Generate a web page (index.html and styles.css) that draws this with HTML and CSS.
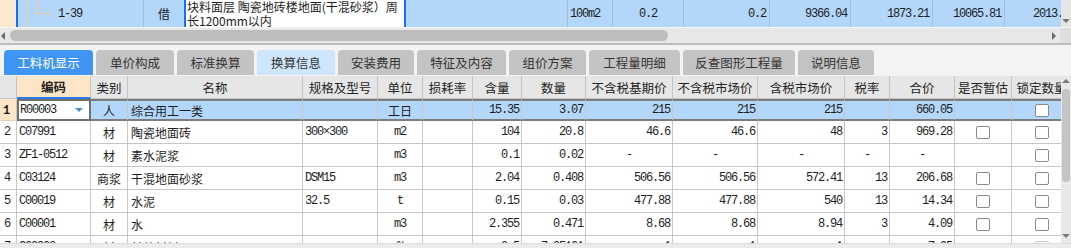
FILE: index.html
```html
<!DOCTYPE html>
<html lang="zh-CN">
<head>
<meta charset="utf-8">
<title>工料机显示</title>
<link rel="stylesheet" href="styles.css">
</head>
<body>
<div class="app">
  <div class="upper">
    <div class="trow">
      <div class="t-c t-peach"></div>
      <div class="t-c t-blueline"></div>
      <div class="t-c t-tree">
        <svg class="tree" width="40" height="27" viewBox="0 0 40 27"><path d="M8.5 0V27M18.5 0V13.5H34" fill="none" stroke="#f4c58c" stroke-width="1"/></svg>
        <span class="mono">1-39</span>
      </div>
      <div class="t-c t-sep t-center">借</div>
      <div class="t-c t-blueline"></div>
      <div class="t-c t-name">块料面层 陶瓷地砖楼地面(干混砂浆）周<br>长1200mm以内</div>
      <div class="t-c t-blueline"></div>
      <div class="t-c"></div>
      <div class="t-c t-sep mono t-left">100m2</div>
      <div class="t-c t-sep mono t-center">0.2</div>
      <div class="t-c t-sep mono t-right">0.2</div>
      <div class="t-c t-sep mono t-right">9366.04</div>
      <div class="t-c t-sep mono t-right">1873.21</div>
      <div class="t-c t-sep mono t-right">10065.81</div>
      <div class="t-c t-sep mono t-right t-last">2013.16</div>
    </div>
    <div class="t-vscroll"><span class="arr arr-down"></span></div>
  </div>
  <div class="hbar">
    <div class="h-track">
      <span class="arr arr-left"></span>
      <span class="h-thumb"></span>
      <span class="arr arr-right"></span>
    </div>
    <div class="h-corner"></div>
  </div>
  <div class="tabs">
    <div class="tab tab-active w89">工料机显示</div>
    <div class="tab w78">单价构成</div>
    <div class="tab w77">标准换算</div>
    <div class="tab tab-light w78">换算信息</div>
    <div class="tab w76">安装费用</div>
    <div class="tab w89">特征及内容</div>
    <div class="tab w77">组价方案</div>
    <div class="tab w91">工程量明细</div>
    <div class="tab w112">反查图形工程量</div>
    <div class="tab w76">说明信息</div>
  </div>
  <div class="lower">
    <div class="grid">
      <div class="row head">
        <div class="c"></div>
        <div class="c c-code-h">编码</div>
        <div class="c">类别</div>
        <div class="c">名称</div>
        <div class="c">规格及型号</div>
        <div class="c">单位</div>
        <div class="c">损耗率</div>
        <div class="c">含量</div>
        <div class="c">数量</div>
        <div class="c">不含税基期价</div>
        <div class="c">不含税市场价</div>
        <div class="c">含税市场价</div>
        <div class="c">税率</div>
        <div class="c">合价</div>
        <div class="c">是否暂估</div>
        <div class="c">锁定数量</div>
      </div>
      <div class="row sel">
        <div class="c rn rn-sel">1</div>
        <div class="c code code-edit"><span class="mono">R00003</span><span class="dd"></span></div>
        <div class="c ctr">人</div>
        <div class="c nm">综合用工一类</div>
        <div class="c"></div>
        <div class="c ctr">工日</div>
        <div class="c"></div>
        <div class="c num">15.35</div>
        <div class="c num">3.07</div>
        <div class="c num">215</div>
        <div class="c num">215</div>
        <div class="c num">215</div>
        <div class="c"></div>
        <div class="c num">660.05</div>
        <div class="c"></div>
        <div class="c ctr"><span class="cb"></span></div>
      </div>
      <div class="row">
        <div class="c rn">2</div>
        <div class="c code mono">C07991</div>
        <div class="c ctr">材</div>
        <div class="c nm">陶瓷地面砖</div>
        <div class="c spec mono">300×300</div>
        <div class="c ctr mono">m2</div>
        <div class="c"></div>
        <div class="c num">104</div>
        <div class="c num">20.8</div>
        <div class="c num">46.6</div>
        <div class="c num">46.6</div>
        <div class="c num">48</div>
        <div class="c num">3</div>
        <div class="c num">969.28</div>
        <div class="c ctr"><span class="cb"></span></div>
        <div class="c ctr"><span class="cb"></span></div>
      </div>
      <div class="row">
        <div class="c rn">3</div>
        <div class="c code mono">ZF1-0512</div>
        <div class="c ctr">材</div>
        <div class="c nm">素水泥浆</div>
        <div class="c"></div>
        <div class="c ctr mono">m3</div>
        <div class="c"></div>
        <div class="c num">0.1</div>
        <div class="c num">0.02</div>
        <div class="c ctr mono">-</div>
        <div class="c ctr mono">-</div>
        <div class="c ctr mono">-</div>
        <div class="c ctr mono">-</div>
        <div class="c ctr mono">-</div>
        <div class="c"></div>
        <div class="c ctr"><span class="cb"></span></div>
      </div>
      <div class="row">
        <div class="c rn">4</div>
        <div class="c code mono">C03124</div>
        <div class="c ctr">商浆</div>
        <div class="c nm">干混地面砂浆</div>
        <div class="c spec mono">DSM15</div>
        <div class="c ctr mono">m3</div>
        <div class="c"></div>
        <div class="c num">2.04</div>
        <div class="c num">0.408</div>
        <div class="c num">506.56</div>
        <div class="c num">506.56</div>
        <div class="c num">572.41</div>
        <div class="c num">13</div>
        <div class="c num">206.68</div>
        <div class="c ctr"><span class="cb"></span></div>
        <div class="c ctr"><span class="cb"></span></div>
      </div>
      <div class="row">
        <div class="c rn">5</div>
        <div class="c code mono">C00019</div>
        <div class="c ctr">材</div>
        <div class="c nm">水泥</div>
        <div class="c spec mono">32.5</div>
        <div class="c ctr mono">t</div>
        <div class="c"></div>
        <div class="c num">0.15</div>
        <div class="c num">0.03</div>
        <div class="c num">477.88</div>
        <div class="c num">477.88</div>
        <div class="c num">540</div>
        <div class="c num">13</div>
        <div class="c num">14.34</div>
        <div class="c ctr"><span class="cb"></span></div>
        <div class="c ctr"><span class="cb"></span></div>
      </div>
      <div class="row">
        <div class="c rn">6</div>
        <div class="c code mono">C00001</div>
        <div class="c ctr">材</div>
        <div class="c nm">水</div>
        <div class="c"></div>
        <div class="c ctr mono">m3</div>
        <div class="c"></div>
        <div class="c num">2.355</div>
        <div class="c num">0.471</div>
        <div class="c num">8.68</div>
        <div class="c num">8.68</div>
        <div class="c num">8.94</div>
        <div class="c num">3</div>
        <div class="c num">4.09</div>
        <div class="c ctr"><span class="cb"></span></div>
        <div class="c ctr"><span class="cb"></span></div>
      </div>
      <div class="row">
        <div class="c rn">7</div>
        <div class="c code mono">C00003</div>
        <div class="c ctr">材</div>
        <div class="c nm">其他材料</div>
        <div class="c"></div>
        <div class="c ctr mono">%</div>
        <div class="c"></div>
        <div class="c num">2.5</div>
        <div class="c num">7.05101</div>
        <div class="c num">1</div>
        <div class="c num">1</div>
        <div class="c num">1</div>
        <div class="c"></div>
        <div class="c num">7.05</div>
        <div class="c"></div>
        <div class="c ctr"><span class="cb cb-faint"></span></div>
      </div>
    </div>
    <div class="vscroll">
      <span class="arr arr-up"></span>
      <span class="v-thumb"></span>
      <span class="v-space"></span>
      <span class="arr arr-down"></span>
    </div>
  </div>
  <div class="bottom"></div>
</div>
</body>
</html>
```
FILE: styles.css
```css
* { box-sizing: border-box; }
html, body { margin: 0; padding: 0; }
body {
  width: 1071px;
  height: 248px;
  overflow: hidden;
  background: #f3f3f3;
  font-family: "Noto Sans CJK SC", "Liberation Sans", sans-serif;
  font-size: 12px;
  color: #1e1e1e;
}
.app { width: 1071px; height: 248px; display: flex; flex-direction: column; }

.mono {
  font-family: "Liberation Mono", "Noto Sans CJK SC", monospace;
  font-size: 12px;
  letter-spacing: -1.2px;
}

/* ---------- upper table row ---------- */
.upper { display: flex; height: 27px; }
.trow {
  width: 1061px;
  overflow: hidden;
  display: grid;
  grid-template-columns: 16px 2px 125px 41px 2px 218px 2px 161px 45px 71px 86px 81px 82px 72px 80px;
  background: #b3d6fb;
}
.t-c { height: 27px; display: flex; align-items: center; white-space: nowrap; overflow: hidden; }
.t-peach { background: #fde9cf; }
.t-blueline { background: #1a6ef2; }
.t-sep { border-left: 1px solid #a8bdd3; }
.t-center { justify-content: center; }
.t-left { padding-left: 2px; }
.t-right { justify-content: flex-end; padding-right: 3px; }
.t-last { padding-right: 9px; }
.t-tree { align-items: center; }
.tree { display: block; flex: none; }
.t-name {
  background: #ffffff;
  display: block;
  padding: 0 0 0 1px;
  line-height: 13.5px;
  white-space: normal;
}
.t-vscroll {
  width: 10px;
  background: #e6e6e6;
  display: flex;
  flex-direction: column;
  justify-content: flex-end;
  align-items: center;
  padding-bottom: 4px;
}

/* arrows */
.arr { display: block; width: 0; height: 0; border-style: solid; }
.arr-down { border-width: 4px 4px 0 4px; border-color: #7a7a7a transparent transparent transparent; }
.arr-up { border-width: 0 4px 4px 4px; border-color: transparent transparent #7a7a7a transparent; }
.arr-left { border-width: 4px 4px 4px 0; border-color: transparent #6a6a6a transparent transparent; }
.arr-right { border-width: 4px 0 4px 4px; border-color: transparent transparent transparent #6a6a6a; }

/* ---------- horizontal scrollbar ---------- */
.hbar {
  display: flex;
  height: 18px;
  border-top: 1px solid #f6f6f6;
  border-bottom: 2px solid #bdbdbd;
}
.h-track {
  flex: 1;
  background: #e8e8e8;
  display: flex;
  align-items: center;
  padding: 0 0 0 1px;
}
.h-thumb {
  display: block;
  width: 658px;
  height: 11px;
  margin-left: 5px;
  border-radius: 6px;
  background: #bdbdbd;
}
.h-track .arr-right { margin-left: auto; margin-right: 4px; }
.h-corner { width: 11px; background: #dedede; }

/* ---------- tabs ---------- */
.tabs {
  height: 31px;
  display: flex;
  align-items: flex-start;
  gap: 3px;
  padding: 5px 0 0 4px;
  background: #f3f3f3;
}
.tab {
  height: 25px;
  display: flex;
  align-items: center;
  justify-content: center;
  background: #c3c3c3;
  color: #333333;
  border-radius: 4px 4px 0 0;
  font-size: 12.5px;
}
.tab-active { background: #3f95f3; color: #ffffff; }
.tab-light { background: #cde6fc; }
.w76 { width: 76px; } .w77 { width: 77px; } .w78 { width: 78px; }
.w89 { width: 89px; } .w91 { width: 91px; } .w112 { width: 112px; }

/* ---------- lower grid ---------- */
.lower { display: flex; height: 167px; }
.grid { width: 1061px; overflow: hidden; background: #ffffff; }
.row {
  display: grid;
  grid-template-columns: 17px 74px 37px 175px 75px 45px 50px 49px 64px 87px 85px 87px 45px 65px 57px 60px;
  height: 23px;
}
.c {
  height: 23px;
  border-right: 1px solid #c7c7c7;
  border-bottom: 1px solid #c7c7c7;
  display: flex;
  align-items: center;
  white-space: nowrap;
  overflow: hidden;
}
.head .c {
  background: #e6e6e6;
  justify-content: center;
  color: #222222;
  font-size: 12.5px;
  border-color: #c4c4c4;
}
.head .c-code-h {
  background: #fde6c8;
  font-weight: bold;
  border-bottom: 2px solid #2a79e4;
}
.rn { padding-left: 4px; font-family: "Liberation Mono", monospace; font-size: 12px; }
.code { padding-left: 2px; }
.ctr { justify-content: center; }
.nm { padding-left: 3px; }
.spec { padding-left: 2px; }
.num {
  justify-content: flex-end;
  padding-right: 2px;
  font-family: "Liberation Mono", monospace;
  font-size: 12px;
  letter-spacing: -1.2px;
}

.row.sel { height: 22px; }
.sel .c {
  height: 22px;
  background: #b3d6fb;
  border-top: 2px solid #7d7d7d;
  border-bottom: 2px solid #7d7d7d;
}
.sel .rn-sel {
  background: #fde6c8;
  border-top: 2px solid #fde6c8;
  border-bottom: 1px solid #e8d2b4;
  font-weight: bold;
  padding-left: 3px;
}
.sel .code-edit {
  background: #ffffff;
  border: 2px solid #707070;
  padding-left: 1px;
}
.dd {
  margin-left: auto;
  margin-right: 6px;
  width: 0; height: 0;
  border-style: solid;
  border-width: 4px 4px 0 4px;
  border-color: #4a8fd8 transparent transparent transparent;
}
.cb {
  display: block;
  width: 14px;
  height: 13px;
  border: 1px solid #8a8a8a;
  border-radius: 2px;
  background: #ffffff;
}
.cb-faint { border-color: #c8c8c8; }

/* vertical scrollbar */
.vscroll {
  width: 10px;
  background: #e8e8e8;
  display: flex;
  flex-direction: column;
  align-items: center;
  padding: 3px 0 5px;
}
.v-thumb {
  display: block;
  width: 8px;
  height: 93px;
  margin-top: 6px;
  border-radius: 4px;
  background: #c4c4c4;
}
.v-space { flex: 1; }

.bottom { height: 5px; background: #ececec; border-top: 1px solid #dcdcdc; }
```
